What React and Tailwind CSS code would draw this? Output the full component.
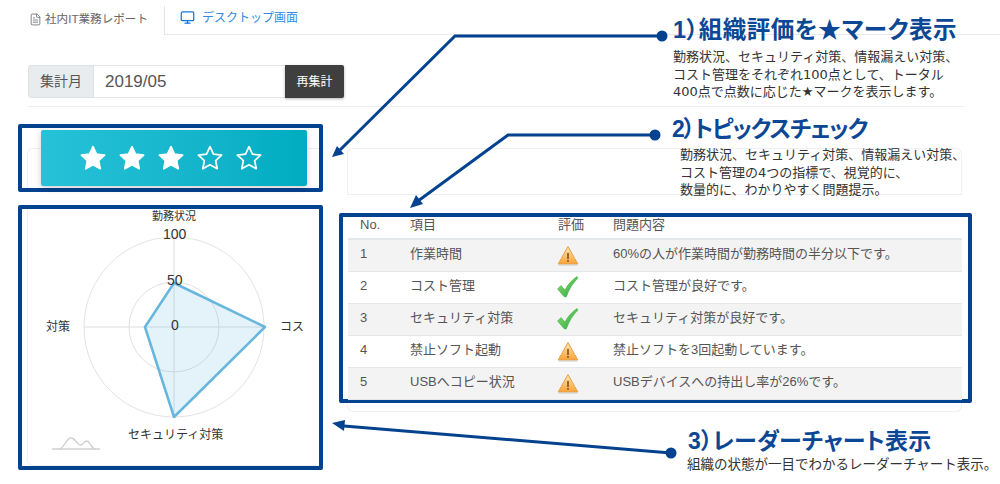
import React from 'react';
import { Monitor, FileText } from 'lucide-react';

const FONT = '"Liberation Sans", "Noto Sans CJK JP", sans-serif';
const NOTE_FONT = '"DejaVu Sans", "Noto Sans CJK JP", sans-serif';

const rows = [
  { no: 1, item: '作業時間', status: 'warn', text: '60%の人が作業時間が勤務時間の半分以下です。' },
  { no: 2, item: 'コスト管理', status: 'ok', text: 'コスト管理が良好です。' },
  { no: 3, item: 'セキュリティ対策', status: 'ok', text: 'セキュリティ対策が良好です。' },
  { no: 4, item: '禁止ソフト起動', status: 'warn', text: '禁止ソフトを3回起動しています。' },
  { no: 5, item: 'USBへコピー状況', status: 'warn', text: 'USBデバイスへの持出し率が26%です。' },
];

const STAR = 'M12 1.6l3.2 6.9 7.5.9-5.5 5.1 1.5 7.4L12 18.2l-6.7 3.7 1.5-7.4L1.3 9.4l7.5-.9z';

function Star({ filled }) {
  return (
    <svg width="26" height="26" viewBox="0 0 24 24" className="block">
      <path d={STAR} fill={filled ? '#fff' : 'none'} stroke="#fff" strokeWidth="1.6" strokeLinejoin="round" />
    </svg>
  );
}

function WarnIcon() {
  return (
    <svg width="22" height="21" viewBox="0 0 22 21" className="block -ml-[1px]">
      <defs>
        <linearGradient id="warnFill" x1="0" y1="0" x2="0" y2="1">
          <stop offset="0" stopColor="#fee9ae" />
          <stop offset="1" stopColor="#f8a23a" />
        </linearGradient>
      </defs>
      <path d="M11 1.5L20.8 19H1.2z" fill="url(#warnFill)" stroke="#e8a04a" strokeWidth="1" strokeLinejoin="round" />
      <path d="M1.500 20H20.500" stroke="#c9c9c9" strokeWidth="1" />
      <rect x="10.250" y="8" width="1.500" height="6" fill="#7a4a12" />
      <rect x="10.250" y="15" width="1.500" height="1.800" fill="#7a4a12" />
    </svg>
  );
}

function CheckIcon() {
  return (
    <svg width="22" height="22" viewBox="0 0 22 22" className="block -ml-[1px]">
      <defs>
        <linearGradient id="okFill" x1="0" y1="0" x2="1" y2="1">
          <stop offset="0" stopColor="#8fe070" />
          <stop offset="1" stopColor="#28a83c" />
        </linearGradient>
      </defs>
      <path d="M0.500 13L4 9.500L8 14C11 8 15 4 20 0.500L21 2C16 7 12 13 9.500 20.500Q8.500 21.500 7 20.500Z" fill="url(#okFill)" stroke="#34a745" strokeWidth="0.5" strokeLinejoin="round" />
    </svg>
  );
}

function Radar() {
  return (
    <svg width="292" height="256" viewBox="28 209 292 256" className="block">
      <circle cx="174" cy="327" r="90" fill="none" stroke="#e3e3e3" strokeWidth="1" />
      <circle cx="174" cy="327" r="45" fill="none" stroke="#e0e0e0" strokeWidth="1" />
      <path d="M174 237V417M84 327H264" stroke="#dedede" strokeWidth="1" />
      <path d="M174 283L265 327L174 417L145 327Z" fill="#5db4df" fillOpacity="0.17" stroke="#66b6de" strokeWidth="2.500" strokeLinejoin="round" />
      <path d="M52 449H100" stroke="#cfcfcf" strokeWidth="1.300" />
      <path d="M60 449C65 447 66 438 71 438C76 438 77 446 81 445C84 444 84 441 87 441C90 441 90 447 95 449" fill="none" stroke="#cfcfcf" strokeWidth="1.300" />
    </svg>
  );
}

function Note({ className, title, titleClass, lines, bodyClass }) {
  return (
    <div className={`absolute ${className}`}>
      <div className={`leading-[24px] font-bold text-[#0b4795] whitespace-nowrap [font-feature-settings:'palt'] ${titleClass}`}>{title}</div>
      <div className={`leading-[17.5px] text-[#333] whitespace-nowrap ${bodyClass}`} style={{ fontFamily: NOTE_FONT }}>
        {lines.map((l) => <div key={l}>{l}</div>)}
      </div>
    </div>
  );
}

export default function App() {
  return (
    <div className="relative w-[1000px] h-[484px] overflow-hidden bg-white text-[#555]" style={{ fontFamily: FONT }}>
      {/* tabs */}
      <div className="ml-[15px] h-[35px] flex text-[11.600px]">
        <div className="w-[150px] h-[29px] mt-[6px] flex items-center pl-[14px] gap-[3px] bg-white border-r border-[#e4e4e4]">
          <FileText size={13} strokeWidth={1.500} className="text-[#666] -mt-[3px]" />
          <span className="text-[#666] -mt-[4px]">社内IT業務レポート</span>
        </div>
        <div className="flex-1 flex items-center pl-[15px] gap-[7px] text-[12px] text-[#2f8ae6] border-b border-[#e8e8e8]">
          <Monitor size={15} strokeWidth={2} className="text-[#1478d8] mt-[1px]" />
          <span className="mt-[1px]">デスクトップ画面</span>
        </div>
      </div>

      {/* filter */}
      <div className="ml-[28px] mt-[30px] flex h-[33px] w-[316px] text-[14px]">
        <div className="w-[66px] flex items-center justify-center bg-[#e9ecef] border border-[#dde1e6] rounded-l-[3px]">集計月</div>
        <div className="w-[191px] flex items-center pl-[11px] border-y border-[#e3e6ea] text-[17px]">2019/05</div>
        <div className="w-[59px] flex items-center justify-center bg-[#3f3f3f] text-white text-[12px] shadow-[0_1px_3px_rgba(0,0,0,0.3)] rounded-r-[2px]">再集計</div>
      </div>
      <div className="ml-[28px] mt-[8px] w-[937px] border-t border-[#eeeeee]" />

      {/* body */}
      <div className="flex mt-[17px] ml-[18px]">
        <div className="w-[305px] shrink-0">
          <div className="relative h-[68px] border-[4px] border-[#03428f] rounded-[2px] flex items-center">
            <div className="absolute left-[5px] top-[20px] right-0 bottom-0 border-l border-t border-[#f0f0f0] rounded-tl-[6px]" />
            <div className="relative ml-[19px] w-[266px] h-[56px] pl-[39px] rounded-[2px] flex items-center gap-[13px] bg-gradient-to-r from-[#25c2d8] to-[#00acc1] shadow-[0_2px_6px_rgba(0,0,0,0.2)]">
              <Star filled />
              <Star filled />
              <Star filled />
              <Star />
              <Star />
            </div>
          </div>
          <div className="mt-[13px] h-[265px] border-[4px] border-[#03428f] rounded-[2px]">
            <div className="ml-[5px] h-[257px] border-l border-b border-[#f0f0f0] rounded-bl-[6px] -mb-[1px]">
              <Radar />
            </div>
          </div>
        </div>

        <div className="ml-[16px] w-[633px] shrink-0">
          <div className="ml-[8px] mt-[24px] w-[615px] h-[46px] rounded-t-[6px] border border-b-0 border-[#f0f0f0]" />
          <div className="border-t border-[#eeeeee] ml-[8px] w-[615px]" />
          <div className="mt-[18px] h-[190px] border-[4px] border-[#03428f] rounded-[2px] px-[5px] text-[13px] leading-[16px]">
            <table className="w-[614px] border-collapse table-fixed">
              <thead>
                <tr className="h-[21px] border-b-2 border-[#e4e7ea]">
                  <th className="w-[62px] pl-[12px] pb-[5px] text-left font-normal">No.</th>
                  <th className="w-[148px] pb-[5px] text-left font-normal">項目</th>
                  <th className="w-[55px] pb-[5px] text-left font-normal">評価</th>
                  <th className="pb-[5px] text-left font-normal">問題内容</th>
                </tr>
              </thead>
              <tbody>
                {rows.map((r) => (
                  <tr key={r.no} className={`h-[32px] border-b border-[#e4e7ea] ${r.no % 2 ? 'bg-[#f3f3f3]' : 'bg-white'}`}>
                    <td className="pl-[12px] pb-[2px]">{r.no}</td>
                    <td className="pb-[2px]">{r.item}</td>
                    <td>{r.status === 'ok' ? <CheckIcon /> : <WarnIcon />}</td>
                    <td className="pb-[2px]">{r.text}</td>
                  </tr>
                ))}
              </tbody>
            </table>
          </div>
          <div className="ml-[8px] w-[615px] h-[9px] rounded-b-[6px] border border-t-0 border-[#f0f0f0]" />
        </div>
      </div>

      {/* radar labels */}
      <span className="absolute left-[152px] top-[208px] text-[11px] text-[#333]">勤務状況</span>
      <span className="absolute left-[163px] top-[226px] text-[14px] leading-[16px] text-[#333]">100</span>
      <span className="absolute left-[167px] top-[272px] text-[14px] leading-[16px] text-[#333]">50</span>
      <span className="absolute left-[171px] top-[317px] text-[14px] leading-[16px] text-[#333]">0</span>
      <span className="absolute left-[46px] top-[318px] text-[12px] text-[#333]">対策</span>
      <span className="absolute left-[280px] top-[318px] text-[12px] text-[#333]">コス</span>
      <span className="absolute left-[128px] top-[426px] text-[12px] text-[#333]">セキュリティ対策</span>

      {/* callouts */}
      <svg className="absolute left-0 top-0 pointer-events-none" width="1000" height="484">
        <g fill="none" stroke="#03428f" strokeWidth="3">
          <path d="M662 36H455L340 150" />
          <path d="M655 135H508L418 201" />
          <path d="M671 453L344 426" />
        </g>
        <g fill="#03428f">
          <circle cx="662" cy="36" r="5.500" />
          <circle cx="655" cy="135" r="5.500" />
          <circle cx="671" cy="453" r="5.500" />
          <path d="M332 157L344 154L337 146Z" />
          <path d="M410 208L423 204L416 195Z" />
          <path d="M332 423L345 420L344 431Z" />
        </g>
      </svg>

      <Note className="left-[673px] top-[18px]" title="1）組織評価を★マーク表示" titleClass="text-[23.500px] tracking-[0.5px]" bodyClass="mt-[6px] text-[13px]"
        lines={['勤務状況、セキュリティ対策、情報漏えい対策、', 'コスト管理をそれぞれ100点として、トータル', '400点で点数に応じた★マークを表示します。']} />
      <Note className="left-[672px] top-[117px]" title="2）トピックスチェック" titleClass="text-[23px] tracking-[-1.2px]" bodyClass="mt-[5px] ml-[8px] text-[13px]"
        lines={['勤務状況、セキュリティ対策、情報漏えい対策、', 'コスト管理の4つの指標で、視覚的に、', '数量的に、わかりやすく問題提示。']} />
      <Note className="left-[688px] top-[429px]" title="3）レーダーチャート表示" titleClass="text-[23px] tracking-[0.2px]" bodyClass="mt-[3px] -ml-[1px] text-[13.500px]"
        lines={['組織の状態が一目でわかるレーダーチャート表示。']} />
    </div>
  );
}
